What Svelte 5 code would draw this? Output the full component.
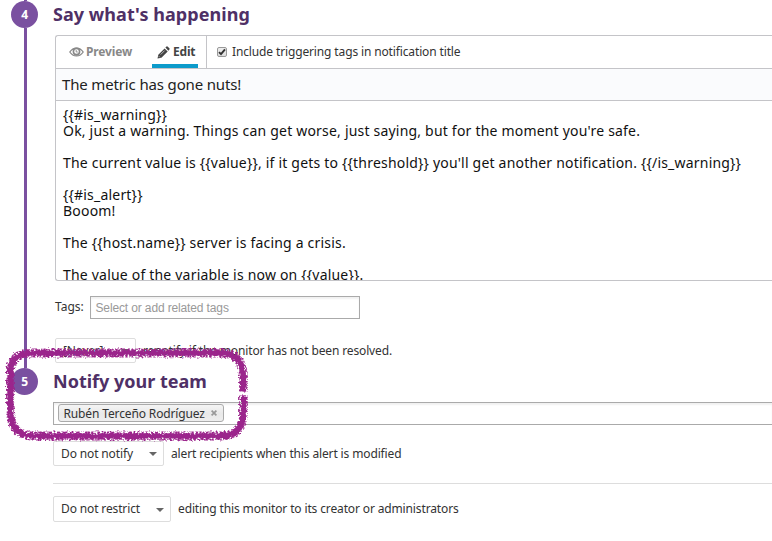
<script>
  const message = `{{#is_warning}}
Ok, just a warning. Things can get worse, just saying, but for the moment you're safe.

The current value is {{value}}, if it gets to {{threshold}} you'll get another notification. {{/is_warning}}

{{#is_alert}}
Booom!

The {{host.name}} server is facing a crisis.

The value of the variable is now on {{value}}.`;

  const loop = 'M243.5 391.5V376Q242 354 223 353H30Q10.500 354 10.500 373V410Q11 435.500 32 436H222Q243.500 435 243.500 412V395.5';
</script>

<main class="page">
  <section class="step first">
    <div class="rail">
      <span class="stub"></span>
      <span class="number">4</span>
      <span class="line"></span>
    </div>
    <div class="content">
      <h2>Say what's happening</h2>
      <div class="editor">
        <div class="tabs">
          <div class="tab preview">
            <svg width="15" height="10" viewBox="0 0 15 10" fill="none" stroke="#888">
              <path d="M.8 5C4.2-.3 10.8-.3 14.2 5C10.8 10.2 4.2 10.2.8 5Z" stroke-width="1.3" />
              <circle cx="7.5" cy="4.5" r="3.1" stroke-width="1.6" />
              <path d="M7.200 3V5H8.800" stroke-width=".9" />
            </svg>
            <span>Preview</span>
          </div>
          <div class="tab edit">
            <svg width="13" height="13" viewBox="0 0 13 13">
              <path d="M.5 12.5L1.3 8.7L7.6 2.4L10.7 5.5L4.4 11.8Z M8.4 1.6L9.5.6Q10.1.1 10.8.7L12.4 2.3Q13 3 12.4 3.6L11.4 4.7Z" fill="#444" />
              <path d="M1.8 10.200L2.900 11.300M3.600 8.600L7.6 4.600" stroke="#fff" stroke-width=".6" />
            </svg>
            <span>Edit</span>
          </div>
          <div class="include">
            <span class="check">
              <svg width="8" height="8" viewBox="0 0 8 8"><path d="M1 4.2L3 6.2L7 1.4" fill="none" stroke="#333" stroke-width="1.9" /></svg>
            </span>
            <span>Include triggering tags in notification title</span>
          </div>
        </div>
        <div class="title">The metric has gone nuts!</div>
        <div class="message">{message}</div>
      </div>
      <div class="tags">
        <span class="label">Tags:</span>
        <div class="field">Select or add related tags</div>
      </div>
      <div class="row renotify">
        <div class="select never"><span>[Never]</span><i></i></div>
        <span class="after">renotify if the monitor has not been resolved.</span>
      </div>
    </div>
  </section>

  <section class="step second">
    <div class="rail"><span class="number">5</span></div>
    <div class="content">
      <h2>Notify your team</h2>
      <div class="recipients">
        <div class="token"><span>Rubén Terceño Rodríguez</span>
          <svg width="6" height="6" viewBox="0 0 6 6"><path d="M.6.6L5.4 5.4M5.4.6L.6 5.4" stroke="#999" stroke-width="1.7" /></svg>
        </div>
      </div>
      <div class="row modified">
        <div class="select notify"><span>Do not notify</span><i></i></div>
        <span class="after">alert recipients when this alert is modified</span>
      </div>
      <hr />
      <div class="row restrict">
        <div class="select limit"><span>Do not restrict</span><i></i></div>
        <span class="after">editing this monitor to its creator or administrators</span>
      </div>
    </div>
  </section>

  <svg class="marker" width="260" height="110" viewBox="0 340 260 110" fill="none" stroke="#9b258c">
    <defs>
      <filter id="rough" filterUnits="userSpaceOnUse" x="0" y="340" width="260" height="110" color-interpolation-filters="sRGB">
        <feTurbulence type="fractalNoise" baseFrequency=".3" numOctaves="2" seed="7" result="noise" />
        <feDisplacementMap in="SourceGraphic" in2="noise" scale="4" xChannelSelector="R" yChannelSelector="G" />
      </filter>
      <filter id="grain" filterUnits="userSpaceOnUse" x="0" y="340" width="260" height="110" color-interpolation-filters="sRGB">
        <feTurbulence type="fractalNoise" baseFrequency=".5" numOctaves="2" seed="3" result="noise" />
        <feColorMatrix in="noise" type="matrix" values="0 0 0 0 0  0 0 0 0 0  0 0 0 0 0  9 0 0 0 -3.8" result="specks" />
        <feDisplacementMap in="SourceGraphic" in2="noise" scale="4" xChannelSelector="R" yChannelSelector="G" result="edge" />
        <feComposite in="edge" in2="specks" operator="in" />
      </filter>
    </defs>
    <path d={loop} stroke-width="5.2" filter="url(#rough)" />
    <path d={loop} stroke-width="8.8" filter="url(#grain)" />
  </svg>
</main>

<style>
  :global(body) { background: #fff; overflow: hidden; }
  .page {
    position: relative;
    width: 772px;
    height: 541px;
    overflow: hidden;
    font: 12px/16px "Noto Sans", sans-serif;
    letter-spacing: -.135px;
    color: #333;
  }
  .step { display: flex; }
  .first { height: 368px; }
  .rail {
    width: 53px;
    flex: none;
    display: flex;
    flex-direction: column;
    align-items: center;
    padding-right: 4px;
    box-sizing: border-box;
  }
  .stub { width: 3px; height: 1px; margin-left: 2px; background: #7a50a0; }
  .line { width: 3px; flex: 1; margin-left: 2px; background: #7a50a0; }
  .number {
    width: 27px;
    height: 27px;
    flex: none;
    border-radius: 50%;
    background: #7a50a0;
    color: #fff;
    font-weight: 700;
    line-height: 27px;
    text-align: center;
  }
  .content { flex: 1; min-width: 0; }
  h2 {
    margin: 0;
    height: 35px;
    font-size: 18px;
    line-height: 29px;
    font-weight: 700;
    letter-spacing: .05px;
    color: #4f3066;
    white-space: nowrap;
  }
  .editor {
    box-sizing: border-box;
    height: 246px;
    margin-left: 2px;
    border: 1px solid #c4c4c8;
    border-right: 0;
    border-radius: 3px 0 0 3px;
  }
  .tabs { display: flex; height: 32px; border-bottom: 1px solid #c4c4c8; }
  .tab { display: flex; align-items: center; font-weight: 700; box-sizing: border-box; height: 32px; }
  .preview { width: 96px; padding-left: 13px; gap: 2px; color: #888; }
  .edit { width: 46px; padding-left: 5px; gap: 3px; color: #444; letter-spacing: -.2px; box-shadow: inset 0 -4px #0c9bcb; }
  .include { display: flex; align-items: center; margin-left: 8px; padding-left: 10px; gap: 5px; border-left: 1px solid #c4c4c8; }
  .check {
    width: 8px;
    height: 8px;
    border: 1px solid #999;
    border-radius: 2px;
    background: linear-gradient(#eee, #ddd);
    display: flex;
  }
  .title {
    height: 31px;
    border-bottom: 1px solid #c4c4c8;
    background: #fafbfd;
    padding-left: 6px;
    font-size: 15px;
    line-height: 31px;
    letter-spacing: -.15px;
    color: #222;
  }
  .message { height: 173px; padding: 6px 0 0 7px; overflow: hidden; font-size: 14px; line-height: 16px; letter-spacing: .2px; white-space: pre; color: #111; }
  .tags { display: flex; margin: 15px 0 0 2px; height: 23px; line-height: 21px; }
  .label { width: 35px; letter-spacing: 0; }
  .field {
    box-sizing: border-box;
    width: 270px;
    height: 23px;
    padding-left: 4.500px;
    border: 1px solid #aaa;
    box-shadow: inset 0 2px 2px #f1f1f1;
    font: 12px/22px "Liberation Sans", sans-serif;
    color: #999;
  }
  .row { display: flex; height: 25px; line-height: 25px; white-space: nowrap; }
  .renotify { margin: 19px 0 0 2px; }
  .select {
    box-sizing: border-box;
    height: 100%;
    display: flex;
    justify-content: space-between;
    align-items: center;
    padding: 0 6px 0 7px;
    border: 1px solid #ddd;
    border-radius: 2px;
  }
  .select i { border: 4px solid transparent; border-top: 4px solid #666; border-bottom: 0; margin-top: 1px; }
  .never { width: 81px; }
  .notify { width: 111px; }
  .limit { width: 118px; }
  .after { margin-left: 7px; }
  .second h2 { height: 34px; line-height: 27px; letter-spacing: 0; }
  .recipients {
    box-sizing: border-box;
    height: 23px;
    padding: 1px 0 0 4px;
    border: 1px solid #aaa;
    border-right: 0;
    box-shadow: inset 0 2px 2px #f1f1f1;
  }
  .token {
    box-sizing: border-box;
    width: 166px;
    height: 18px;
    display: flex;
    justify-content: space-between;
    align-items: center;
    padding: 0 6px 0 4.500px;
    border: 1px solid #aaa;
    border-radius: 3px;
    background: linear-gradient(#f4f4f4, #e9e9e9 55%, #eee);
    white-space: nowrap;
  }
  .token span { position: relative; top: 1px; }
  .modified { margin-top: 16px; }
  hr { margin: 17px 0 12px; height: 1px; border: 0; background: #ddd; }
  .restrict { height: 26px; line-height: 26px; }
  .marker { position: absolute; left: 0; top: 340px; }
</style>
